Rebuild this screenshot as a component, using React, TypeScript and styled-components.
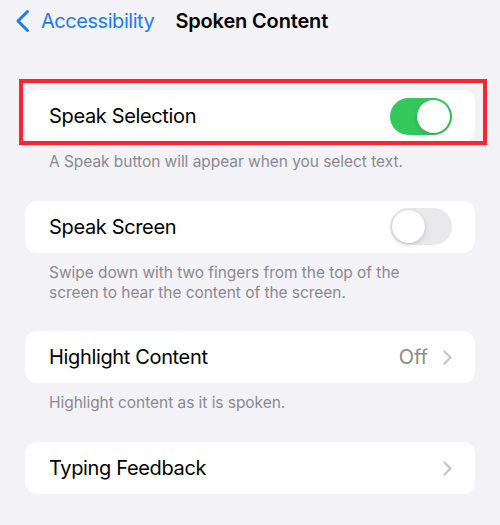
import React from "react";
import styled, { createGlobalStyle } from "styled-components";

const Global = createGlobalStyle`
  html, body {
    margin: 0;
    padding: 0;
    background: #f2f2f7;
  }
  body {
    font-family: Inter, "Noto Sans", "Liberation Sans", sans-serif;
    -webkit-font-smoothing: antialiased;
  }
`;

const Page = styled.div`
  width: 500px;
  height: 525px;
  background: #f2f2f7;
  overflow: hidden;
`;

const NavBar = styled.div`
  height: 42px;
  display: flex;
  align-items: center;
  padding-left: 15px;
  box-sizing: border-box;
`;

const BackButton = styled.div`
  display: flex;
  align-items: center;
  gap: 11px;
  color: #1b7cf6;
  font-size: 20px;
  letter-spacing: -0.45px;
`;

const Title = styled.div`
  margin-left: 21px;
  font-size: 20px;
  font-weight: 600;
  color: #000;
  letter-spacing: -0.15px;
`;

const List = styled.div`
  padding: 48px 25px 0;
`;

const Highlighted = styled.div`
  position: relative;
`;

const Marker = styled.div`
  position: absolute;
  left: -6px;
  right: -12px;
  top: -11px;
  bottom: -3px;
  border: 4px solid #fb2530;
  pointer-events: none;
`;

const Card = styled.div`
  background: #fff;
  border-radius: 12px;
  height: 52px;
  display: flex;
  align-items: center;
  padding: 0 23px 0 24px;
`;

const Label = styled.div`
  flex: 1;
  font-size: 20px;
  color: #000;
  letter-spacing: -0.35px;
`;

const Value = styled.div`
  font-size: 20px;
  color: #8a8a8e;
  margin-right: 15px;
`;

const Caption = styled.div`
  padding: 10px 24px 28.7px;
  font-size: 15.5px;
  line-height: 20px;
  color: #8a8a8e;
  letter-spacing: -0.05px;
`;

const Track = styled.div<{ $on: boolean }>`
  position: relative;
  width: 62px;
  height: 37px;
  border-radius: 19px;
  background: ${(p) => (p.$on ? "#34c759" : "#e9e9eb")};
`;

const Knob = styled.div<{ $on: boolean }>`
  position: absolute;
  top: 2px;
  left: ${(p) => (p.$on ? "27px" : "2px")};
  width: 33px;
  height: 33px;
  border-radius: 50%;
  background: #fff;
  box-shadow: 0 2px 5px rgba(0, 0, 0, 0.14), 0 0 1px rgba(0, 0, 0, 0.16);
`;

const Toggle = ({ on }: { on: boolean }) => (
  <Track $on={on}>
    <Knob $on={on} />
  </Track>
);

const BackChevron = () => (
  <svg width="15" height="24" viewBox="0 0 15 24" fill="none">
    <path
      d="M12.5 2.5 L3 12 L12.5 21.5"
      stroke="#1b7cf6"
      strokeWidth="3"
      strokeLinecap="round"
      strokeLinejoin="round"
    />
  </svg>
);

const Disclosure = () => (
  <svg width="9" height="15" viewBox="0 0 9 15" fill="none">
    <path
      d="M1.5 1.5 L7.5 7.5 L1.5 13.5"
      stroke="#c4c4c7"
      strokeWidth="2.2"
      strokeLinecap="round"
      strokeLinejoin="round"
    />
  </svg>
);

export default function App() {
  return (
    <Page>
      <Global />
      <NavBar>
        <BackButton>
          <BackChevron />
          <span>Accessibility</span>
        </BackButton>
        <Title>Spoken Content</Title>
      </NavBar>
      <List>
        <Highlighted>
          <Card>
            <Label>Speak Selection</Label>
            <Toggle on />
          </Card>
          <Marker />
        </Highlighted>
        <Caption>A Speak button will appear when you select text.</Caption>

        <Card>
          <Label>Speak Screen</Label>
          <Toggle on={false} />
        </Card>
        <Caption>
          Swipe down with two fingers from the top of the
          <br />
          screen to hear the content of the screen.
        </Caption>

        <Card>
          <Label>Highlight Content</Label>
          <Value>Off</Value>
          <Disclosure />
        </Card>
        <Caption>Highlight content as it is spoken.</Caption>

        <Card>
          <Label>Typing Feedback</Label>
          <Disclosure />
        </Card>
      </List>
    </Page>
  );
}
